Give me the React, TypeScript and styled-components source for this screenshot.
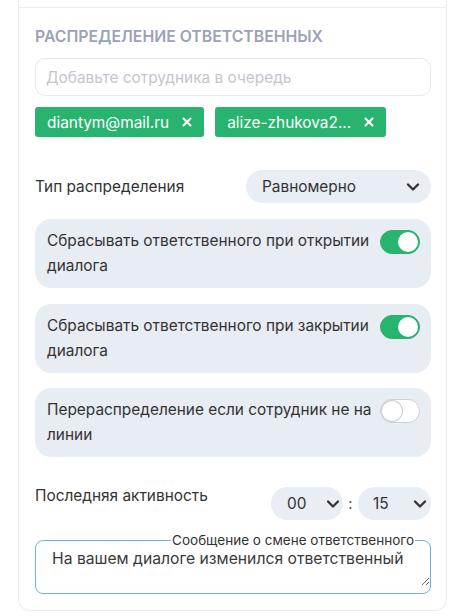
import React from "react";
import styled, { createGlobalStyle } from "styled-components";
import { X, ChevronDown } from "lucide-react";

const Global = createGlobalStyle`
  html, body { margin: 0; padding: 0; background: #fff; }
  body { font-family: Inter, "Noto Sans", sans-serif; color: #333; }
  * { box-sizing: border-box; }
`;

const Page = styled.div`
  padding: 0 18px;
`;

const Card = styled.div`
  width: 429px;
  border: 1px solid #ebebf3;
  border-top: none;
  border-radius: 0 0 12px 12px;
`;

const PrevSection = styled.div`
  height: 8px;
  border-bottom: 1px solid #ebebf3;
`;

const Body = styled.div`
  padding: 20px 15px 16px 16px;
  display: flex;
  flex-direction: column;
`;

const Title = styled.div`
  font-size: 15.8px;
  line-height: 18px;
  font-weight: 600;
  color: #9ca2b7;
  text-transform: uppercase;
`;

const Input = styled.input`
  margin-top: 12px;
  height: 38px;
  width: 100%;
  border: 1px solid #e6e8ee;
  border-radius: 10px;
  padding: 0 10px;
  font: inherit;
  font-size: 15.4px;
  color: #333;
  outline: none;
  &::placeholder { color: #c3c6cd; }
`;

const Chips = styled.div`
  margin-top: 11px;
  display: flex;
  gap: 11px;
`;

const Chip = styled.div`
  height: 30px;
  display: flex;
  align-items: center;
  gap: 11px;
  padding: 0 10px 0 12px;
  background: #28b46f;
  color: #fff;
  border-radius: 3px;
  font-size: 15.4px;
`;

const Row = styled.div<{ $mt: number; $align?: string }>`
  margin-top: ${(p) => p.$mt}px;
  display: flex;
  justify-content: space-between;
  align-items: ${(p) => p.$align || "center"};
`;

const Label = styled.div`
  font-size: 15.4px;
  line-height: 18px;
  color: #333;
`;

const Select = styled.div<{ $w: number; $pl: number; $pr: number }>`
  width: ${(p) => p.$w}px;
  height: 33px;
  border-radius: 17px;
  background: #e9edf4;
  display: flex;
  align-items: center;
  justify-content: space-between;
  padding: 0 ${(p) => p.$pr}px 0 ${(p) => p.$pl}px;
  font-size: 15.4px;
  color: #333;
`;

const Box = styled.div<{ $mt: number }>`
  margin-top: ${(p) => p.$mt}px;
  background: #e8ecf3;
  border-radius: 16px;
  padding: 9px 11px 10px 12px;
  display: flex;
  align-items: flex-start;
  gap: 3px;
`;

const BoxText = styled.div`
  flex: 1;
  font-size: 15.4px;
  line-height: 25px;
  color: #333;
`;

const Toggle = styled.div<{ $on: boolean }>`
  flex-shrink: 0;
  margin-top: 2px;
  width: 40px;
  height: 24px;
  border-radius: 12px;
  background: ${(p) => (p.$on ? "#28b46f" : "#fff")};
  border: 1px solid ${(p) => (p.$on ? "#28b46f" : "#cfcfd4")};
  position: relative;
  &::after {
    content: "";
    position: absolute;
    top: 1px;
    ${(p) => (p.$on ? "right: 1px;" : "left: 1px;")}
    width: 20px;
    height: 20px;
    border-radius: 50%;
    background: #fff;
    ${(p) => (p.$on ? "" : "box-shadow: 0 0 0 1px #cfcfd4;")}
  }
`;

const Time = styled.div`
  display: flex;
  align-items: center;
`;

const Colon = styled.span`
  width: 15px;
  text-align: center;
  font-size: 15px;
  color: #555;
`;

const Fieldset = styled.fieldset`
  margin: 13px 0 0 0;
  padding: 0;
  border: 1.5px solid #64b6e3;
  border-radius: 8px;
  height: 61px;
  display: flex;
`;

const Legend = styled.legend`
  margin-left: auto;
  margin-right: 15px;
  padding: 0 1px;
  font-size: 13.5px;
  line-height: 14px;
  color: #333;
`;

const TextArea = styled.textarea`
  flex: 1;
  width: 100%;
  border: none;
  outline: none;
  background: transparent;
  resize: vertical;
  font: inherit;
  font-size: 15.7px;
  line-height: 18px;
  color: #3a3a3a;
  padding: 3px 12px 0 16px;
`;

const chevron = <ChevronDown size={20} strokeWidth={2.8} color="#333" />;

export default function App() {
  return (
    <>
      <Global />
      <Page>
        <Card>
          <PrevSection />
          <Body>
            <Title>Распределение ответственных</Title>
            <Input placeholder="Добавьте сотрудника в очередь" />
            <Chips>
              <Chip>
                diantym@mail.ru <X size={14} strokeWidth={3.5} />
              </Chip>
              <Chip>
                alize-zhukova2... <X size={14} strokeWidth={3.5} />
              </Chip>
            </Chips>
            <Row $mt={33}>
              <Label>Тип распределения</Label>
              <Select $w={185} $pl={16} $pr={8}>
                Равномерно {chevron}
              </Select>
            </Row>
            <Box $mt={16}>
              <BoxText>Сбрасывать ответственного при открытии диалога</BoxText>
              <Toggle $on />
            </Box>
            <Box $mt={16}>
              <BoxText>Сбрасывать ответственного при закрытии диалога</BoxText>
              <Toggle $on />
            </Box>
            <Box $mt={15}>
              <BoxText>Перераспределение если сотрудник не на линии</BoxText>
              <Toggle $on={false} />
            </Box>
            <Row $mt={30} $align="flex-start">
              <Label>Последняя активность</Label>
              <Time>
                <Select $w={72} $pl={16} $pr={0}>00 {chevron}</Select>
                <Colon>:</Colon>
                <Select $w={73} $pl={15} $pr={1}>15 {chevron}</Select>
              </Time>
            </Row>
            <Fieldset>
              <Legend>Сообщение о смене ответственного</Legend>
              <TextArea defaultValue="На вашем диалоге изменился ответственный" />
            </Fieldset>
          </Body>
        </Card>
      </Page>
    </>
  );
}
